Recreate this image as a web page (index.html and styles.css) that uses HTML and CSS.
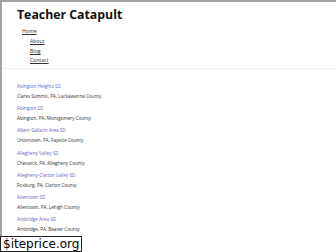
FILE: index.html
```html
<!DOCTYPE html>
<html lang="en">
<head>
    <meta charset="UTF-8">
    <meta name="viewport" content="width=device-width, initial-scale=1.0">
    <title>Teacher Catapult</title>
    <link rel="stylesheet" href="styles.css">
</head>
<body>

    <div class="page">
        <header class="site-header">
            <h1 class="site-title">Teacher Catapult</h1>
            <nav class="site-nav">
                <a href="#" class="nav-link">Home</a>
                <ul class="sub-menu">
                    <li><a href="#" class="nav-link">About</a></li>
                    <li><a href="#" class="nav-link">Blog</a></li>
                    <li><a href="#" class="nav-link">Contact</a></li>
                </ul>
            </nav>
        </header>

        <main class="districts">
            <div class="district">
                <a href="#">Abington Heights SD</a>
                <div class="location">Clarks Summit, PA, Lackawanna County</div>
            </div>
            <div class="district">
                <a href="#">Abington SD</a>
                <div class="location">Abington, PA, Montgomery County</div>
            </div>
            <div class="district">
                <a href="#">Albert Gallatin Area SD</a>
                <div class="location">Uniontown, PA, Fayette County</div>
            </div>
            <div class="district">
                <a href="#">Allegheny Valley SD</a>
                <div class="location">Cheswick, PA, Allegheny County</div>
            </div>
            <div class="district">
                <a href="#">Allegheny-Clarion Valley SD</a>
                <div class="location">Foxburg, PA, Clarion County</div>
            </div>
            <div class="district">
                <a href="#">Allentown SD</a>
                <div class="location">Allentown, PA, Lehigh County</div>
            </div>
            <div class="district">
                <a href="#">Ambridge Area SD</a>
                <div class="location">Ambridge, PA, Beaver County</div>
            </div>
        </main>
    </div>

    <div class="watermark">$iteprice.org</div>

</body>
</html>
```

FILE: styles.css
```css
body {
    margin: 0;
    font-family: "Open Sans", "Noto Sans", sans-serif;
    background: #fff;
    color: #333;
    height: 252px;
    overflow: hidden;
}
.page {
    border-top: 2px solid #a3a3a3;
    border-left: 2px solid #a3a3a3;
    min-height: 250px;
    box-sizing: border-box;
}
.site-header {
    padding: 5px 0 2px 15px;
    border-bottom: 1px solid #f1f1f1;
}
.site-title {
    margin: 0;
    font-size: 12.3px;
    font-weight: 700;
    color: #111;
    line-height: 16px;
}
.site-nav {
    margin-top: 4px;
    padding-left: 5px;
    font-size: 5.2px;
    line-height: 9.4px;
}
.nav-link {
    color: #333;
    text-decoration: underline;
}
.sub-menu {
    list-style: none;
    margin: 1px 0 0;
    padding-left: 8px;
}
.districts {
    padding: 12px 0 0 15px;
    font-size: 4.6px;
    line-height: 10px;
}
.district {
    margin-bottom: 2.3px;
}
.district a {
    color: #6565c4;
    text-decoration: none;
}
.location {
    color: #333;
}
.watermark {
    position: absolute;
    left: 0;
    bottom: 0;
    background: #fff;
    border: 1px solid #222;
    font-family: "DejaVu Sans", sans-serif;
    font-size: 12px;
    line-height: 14px;
    padding: 0 2px;
    color: #000;
}
```
